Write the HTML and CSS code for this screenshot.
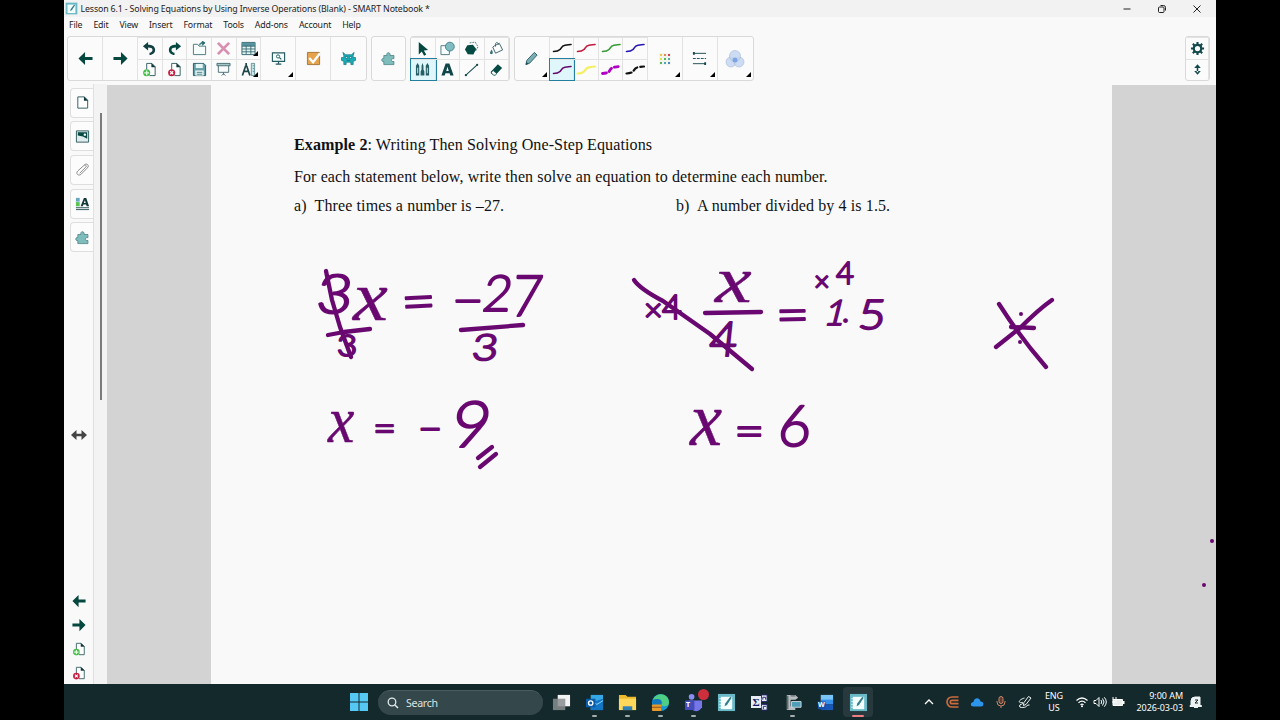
FILE: index.html
```
<!DOCTYPE html>
<html lang="en">
<head>
    <meta charset="UTF-8">
    <meta name="viewport" content="width=device-width, initial-scale=1.0">
    <title>Lesson 6.1 - SMART Notebook</title>
    <link rel="stylesheet" href="styles.css">
</head>
<body>

<!-- shared icons -->
<svg class="defs" width="0" height="0">
    <symbol id="arrow-left" viewBox="0 0 16 16"><path d="M.5 8 7.500 1V6.300H15.500v3.400H7.500V15Z" fill="#05483f"/></symbol>
    <symbol id="arrow-right" viewBox="0 0 16 16"><path d="M15.500 8 8.500 1V6.300H.5v3.400h8V15Z" fill="#05483f"/></symbol>
    <symbol id="page-add" viewBox="0 0 16 16"><path d="M5 8V1.500h5.500L14 5v9.500H8" fill="#fff" stroke="#315d60"/><path d="M10 1v4.500h4.500Z" fill="#12383b"/><circle cx="5" cy="11.500" r="3.800" fill="#47bd4b"/><path d="M5 9v5M2.500 11.500h5" stroke="#e9ffe9" stroke-width="1.300"/></symbol>
    <symbol id="page-del" viewBox="0 0 16 16"><path d="M5 8V1.500h5.500L14 5v9.500H8" fill="#fff" stroke="#315d60"/><path d="M10 1v4.500h4.500Z" fill="#12383b"/><circle cx="5" cy="11.500" r="3.800" fill="#c21d3f"/><path d="m3.400 9.900 3.200 3.200m0-3.200-3.200 3.200" stroke="#fff" stroke-width="1.300"/></symbol>
    <symbol id="puzzle" viewBox="0 0 16 16"><path d="M3 14.500V11.300C0 12 .2 7.200 3 8V4.800h3.400C5 .8 10.800.8 9.600 4.800h4.200v3.400c-3.600-.8-3.600 3.800 0 3v3.300Z" fill="#7fbdbd" stroke="#457f83" stroke-width=".8"/></symbol>
    <symbol id="curve" viewBox="0 0 20 12"><path d="M1.500 9.500C4 9.500 6.500 9 8 7.500S9.500 4 13 3.300s4-.8 6-.8" fill="none" stroke="currentColor" stroke-linecap="round"/></symbol>
    <symbol id="notebook" viewBox="0 0 20 20"><path d="M1 1h18v18H1Z" fill="#69b9c6"/><path d="M4 4h12v13H4Z" fill="#f4ffff"/><path d="M4 6H2.500M4 9H2.500M4 12H2.500M4 15H2.500" stroke="#e8ffff"/><path d="m8 14 .6-3L14 4l1.500 1-5 7.500Z" fill="#357f8d"/></symbol>
</svg>

<div class="screen">
    <div class="titlebar">
        <svg class="logo"><use href="#notebook"/></svg>
        <span class="title">Lesson 6.1 - Solving Equations by Using Inverse Operations (Blank) - SMART Notebook *</span>
        <div class="window-buttons">
            <svg viewBox="0 0 10 10"><path d="M1.500 5h7"/></svg>
            <svg viewBox="0 0 10 10"><rect x="1.500" y="3" width="5.500" height="5.500" rx="1"/><path d="M3.500 1.500h3q2 0 2 2v3"/></svg>
            <svg viewBox="0 0 10 10"><path d="m1.500 1.500 7 7m0-7-7 7"/></svg>
        </div>
    </div>

    <div class="menubar">
        <span>File</span><span>Edit</span><span>View</span><span>Insert</span><span>Format</span><span>Tools</span><span>Add-ons</span><span>Account</span><span>Help</span>
    </div>

    <div class="toolbar">
        <div class="group">
            <div class="cell big"><svg><use href="#arrow-left"/></svg></div>
            <div class="cell big"><svg><use href="#arrow-right"/></svg></div>
            <div class="pairs five">
                <div class="cell"><svg viewBox="0 0 16 16"><path d="M1 5.500 6.500 1v3C11 4 14 6 14 9.500c0 3-2.500 5-6 5.500v-2.500c2-.4 3.200-1.400 3.200-3C11.200 7.800 9.500 7 6.500 7v3Z" fill="#123f41"/></svg></div>
                <div class="cell"><svg viewBox="0 0 16 16"><path d="M15 5.500 9.500 1v3C5 4 2 6 2 9.500c0 3 2.500 5 6 5.500v-2.500c-2-.4-3.200-1.400-3.200-3C4.800 7.800 6.500 7 9.500 7v3Z" fill="#05483f"/></svg></div>
                <div class="cell"><svg viewBox="0 0 16 16"><path d="M1.500 14.500V3.500H6l1.500 2h7v9Z" fill="#f6fcfc" stroke="#4b777e"/><path d="M8 4.500C8 2 10 1.500 12 1.500M11 0l3 2-3 2.500Z" fill="#2b6b70" stroke="#2b6b70" stroke-width=".8"/></svg></div>
                <div class="cell"><svg viewBox="0 0 16 16"><path d="m2 2 12 12M14 2 2 14" stroke="#d98fb0" stroke-width="3"/></svg></div>
                <div class="cell"><svg viewBox="0 0 16 16"><path d="M1 1.500h14v13H1Z" fill="#e3f2f3" stroke="#33666b"/><path d="M1 2h14v3.500H1Z" fill="#5794a0"/><path d="M1 5.500h14M1 8.500h14M1 11.500h14M5.500 5v9M10.500 5v9" stroke="#33666b" stroke-width=".9"/></svg><i class="more"></i></div>
                <div class="cell"><svg><use href="#page-add"/></svg></div>
                <div class="cell"><svg><use href="#page-del"/></svg></div>
                <div class="cell"><svg viewBox="0 0 16 16"><path d="M1.500 1.500h11l2 2v11h-13Z" fill="#659fa7" stroke="#285b62"/><path d="M4 2h7.500v4.500H4Z" fill="#e6f6f6"/><path d="M3.500 9h9v5.500h-9Z" fill="#edf9f9"/><path d="M5 11h6M5 13h6" stroke="#477b82"/></svg></div>
                <div class="cell"><svg viewBox="0 0 16 16"><path d="M1 1.500h14v2.500H1Z" fill="#a5c7ca" stroke="#496f75"/><path d="M2.500 4v7h11V4M8 11v2.500M6 14.500l2-2 2 2" fill="none" stroke="#496f75"/></svg></div>
                <div class="cell"><svg viewBox="0 0 16 16"><path d="M5.500 1v3M5 4 1.500 14.500M6 4l3.500 10.500M3 10h5" fill="none" stroke="#1e484c" stroke-width="1.800"/><path d="M11 1.500h3.500v13H11ZM12.500 4H14M12.500 7H14M12.500 10H14" fill="#cce5e8" stroke="#477d83" stroke-width=".8"/></svg><i class="more"></i></div>
            </div>
            <div class="cell big"><svg viewBox="0 0 16 16"><path d="M1.500 2h13v9h-13Z" fill="#f5ffff" stroke="#245b60" stroke-width="1.200"/><circle cx="7.500" cy="5.800" r="1.700" fill="none" stroke="#245b60"/><path d="m9 7 2 2M8 11v2.500M5 14h6" stroke="#245b60" stroke-width="1.300"/></svg><i class="more"></i></div>
            <div class="cell big"><svg viewBox="0 0 16 16"><path d="M1.500 1.500h13v13h-13Z" fill="#e7a34c" stroke="#a47537"/><path d="m3.500 7.500 4 4.500L15 2.500" fill="none" stroke="#fff" stroke-width="2.500"/></svg></div>
            <div class="cell big"><svg viewBox="0 0 16 16"><path d="m3 5-1-3.500L5 4h6l3-2.500L13 5v2h2.500v3L13 11v3.500h-2.500V12h-5v2.500H3V11L.5 10V7H3Z" fill="#1baeb8" stroke="#126d77" stroke-width=".7"/><path d="M5 6h2v2H5Zm4 0h2v2H9ZM6 10h4" fill="#e7ffff" stroke="#075760" stroke-width=".6"/></svg></div>
        </div>

        <div class="group"><div class="cell single"><svg><use href="#puzzle"/></svg></div></div>

        <div class="group">
            <div class="pairs four">
                <div class="cell"><svg viewBox="0 0 16 16"><path d="m4 1 10 8.500-4.600.6 2.600 4.400-2.300 1.200-2.500-4.500L4 14.500Z" fill="#05483f"/></svg></div>
                <div class="cell"><svg viewBox="0 0 16 16"><path d="M1 5h9v9.500H1Z" fill="#f7ffff" stroke="#4f7881"/><circle cx="10.500" cy="6" r="4.700" fill="#80bcc2" stroke="#438089"/></svg></div>
                <div class="cell"><svg viewBox="0 0 16 16"><path d="m6 2 6-.8 3 5-3 5" fill="#fff" stroke="#58777a" stroke-dasharray="2 1"/><path d="m3.500 4.500 6-.5 3.500 4.500-3 6-6-.5-3-5Z" fill="#064b43"/></svg></div>
                <div class="cell"><svg viewBox="0 0 16 16"><path d="m6 5 5-2.500 3.500 7L7 13 4 6.500ZM7 6c-1-6 3-5 3-2" fill="#fff" stroke="#366067"/><path d="M3 9C.5 12 .5 14 2.500 14s2-2 .5-5" fill="#35727a"/></svg></div>
                <div class="cell active"><svg viewBox="0 0 16 16"><path d="m2.800 1 1.700 3v10.500H1V4ZM8 1l1 3v4l1 2v4.500H6V10l1-2V4ZM13.200 1 15 4v10.500h-3.500V4Z" fill="#265e66"/><path d="M2.800 6v6M13.200 6v6" stroke="#a4d3d8" stroke-width="1.200"/></svg></div>
                <div class="cell"><svg viewBox="0 0 16 16"><path d="M1.500 14.500 6 1.500h4l4.500 13H11l-.8-2.500H5.800L5 14.500Z" fill="#12464a"/><path d="m8 5 1.300 4.500H6.700Z" fill="#fff"/></svg></div>
                <div class="cell"><svg viewBox="0 0 16 16"><path d="m2 14 12-11" stroke="#164b4e" stroke-width="1.100"/><circle cx="2" cy="14" r="1.200" fill="#164b4e"/><circle cx="14" cy="3" r="1.200" fill="#164b4e"/></svg></div>
                <div class="cell"><svg viewBox="0 0 16 16"><path d="m2 10.500 7.500-8L14 6.500l-7.500 8H5l-3-2.500Z" fill="#064b43"/><path d="m4.300 9 4 3.500-1.800 1.500H5l-2.500-2.500Z" fill="#fff" stroke="#064b43" stroke-width=".6"/></svg></div>
            </div>
        </div>

        <div class="group">
            <div class="cell big"><svg viewBox="0 0 16 16"><path d="M2 14.500 3 10 11 1.500l3 2.800-8 8.700Z" fill="#78afb4" stroke="#315f66"/><path d="m2 14.500.7-2.700 2 2Z" fill="#164b4e"/></svg><i class="more"></i></div>
            <div class="pairs four">
                <div class="cell pen black"><svg><use href="#curve"/></svg></div>
                <div class="cell pen red"><svg><use href="#curve"/></svg></div>
                <div class="cell pen green"><svg><use href="#curve"/></svg></div>
                <div class="cell pen blue"><svg><use href="#curve"/></svg></div>
                <div class="cell pen purple active"><svg><use href="#curve"/></svg></div>
                <div class="cell pen yellow"><svg><use href="#curve"/></svg></div>
                <div class="cell pen magenta"><svg><use href="#curve"/></svg></div>
                <div class="cell pen dashed"><svg><use href="#curve"/></svg></div>
            </div>
            <div class="cell big">
                <div class="swatches"><b></b><b></b><b></b><b></b><b></b><b></b><b></b><b></b><b></b></div>
                <i class="more"></i>
            </div>
            <div class="cell big"><svg viewBox="0 0 16 16"><path d="M1 2.500h14M1 13.500h14" stroke="#164b4e"/><path d="M1 8h14" stroke="#164b4e" stroke-dasharray="3 1.200"/><path d="M1 1h2v3H1ZM13 12h2v3h-2Z" fill="#164b4e"/></svg><i class="more"></i></div>
            <div class="cell big"><svg class="wide" viewBox="0 0 20 20"><g fill="#c2d5f0" fill-opacity=".8" stroke="#a3b8da" stroke-width=".6"><circle cx="6" cy="13" r="5"/><circle cx="14" cy="13" r="5"/><circle cx="10" cy="7" r="5.500"/></g><circle cx="10" cy="11" r="2.500" fill="#7fa4e0"/></svg><i class="more"></i></div>
        </div>

        <div class="group settings">
            <div class="pairs">
                <div class="cell"><svg viewBox="0 0 16 16"><circle cx="8" cy="8" r="4" fill="none" stroke="#12494c" stroke-width="2.400"/><path d="M8 1v2.500M8 12.500V15M1 8h2.500M12.500 8H15M3 3l2 2M11 11l2 2M13 3l-2 2M5 11l-2 2" stroke="#12494c" stroke-width="2.200"/></svg></div>
                <div class="cell"><svg viewBox="0 0 16 16"><path d="m8 2.500 3.500 4h-7ZM8 13.500l3.500-4h-7ZM7.200 5h1.600v6H7.200Z" fill="#12494c"/></svg></div>
            </div>
        </div>
    </div>

    <div class="workspace">
        <div class="sidebar">
            <div class="tab"><svg viewBox="0 0 16 16"><path d="M3 2h7l3.500 3.500V14H3Z" fill="#fff" stroke="#2f5a5f"/><path d="M9.500 1.500v4.500H14Z" fill="#0c3438"/></svg></div>
            <div class="tab"><svg viewBox="0 0 16 16"><path d="M1.500 2h13v12h-13Z" fill="#e0eceb" stroke="#2f5a5f"/><path d="M3 3.500h10v7L8.500 8 3 7Z" fill="#064b43"/><circle cx="10.500" cy="6" r="1.300" fill="#fff"/></svg></div>
            <div class="tab"><svg viewBox="0 0 16 16"><path d="m5 12 6.500-6.500c1.500-1.500-.8-3-2-1.800L3 9.500c-3 3 1 6 3.500 3.500l6.500-6.500c3-3-.5-5.500-3-3.500" fill="none" stroke="#888"/></svg></div>
            <div class="tab"><svg viewBox="0 0 16 16"><path d="M1 2h4v4H1Z" fill="#65a8bf"/><path d="M1 6.500h4V11H1Z" fill="#5bc354"/><path d="m6 11 3.500-9H12l3 9h-2.500l-.7-2H9l-.7 2Z" fill="#12383b"/><path d="m10.500 4.500 1 3h-2Z" fill="#fff"/><path d="M1 12.500h14M1 14.500h14" stroke="#274f55"/></svg></div>
            <div class="tab"><svg><use href="#puzzle"/></svg></div>
            <svg class="resize" viewBox="0 0 18 12"><path d="M1 6 6.500 1v3.700h5V1L17 6l-5.500 5V7.300h-5V11Z" fill="#444"/></svg>
            <div class="page-nav">
                <svg><use href="#arrow-left"/></svg>
                <svg><use href="#arrow-right"/></svg>
                <svg><use href="#page-add"/></svg>
                <svg><use href="#page-del"/></svg>
            </div>
        </div>
        <div class="scroll-strip"><div class="thumb"></div></div>
        <div class="canvas">
            <div class="page">
                <p class="heading"><b>Example 2</b>: Writing Then Solving One-Step Equations</p>
                <p class="intro">For each statement below, write then solve an equation to determine each number.</p>
                <div class="questions">
                    <p class="qa">a)&nbsp; Three times a number is –27.</p>
                    <p class="qb">b)&nbsp; A number divided by 4 is 1.5.</p>
                </div>
            </div>
        </div>

        <!-- pen layer, uses screen coordinates -->
        <svg class="ink" viewBox="64 84 1152 600">
            <g class="hand">
                <text transform="translate(315 313) skewX(-6) scale(1.15 1)" font-size="54">3</text>
                <text class="var" transform="translate(353 320) scale(1.12 1)" font-size="70">x</text>
                <text transform="translate(402 321) rotate(-3) scale(1.12 1)" font-size="54">=</text>
                <text transform="translate(452 318) scale(1.1 1)" font-size="50">−</text>
                <text transform="translate(481 311) skewX(-8)" font-size="50">2</text>
                <text transform="translate(510 316) skewX(-6) scale(.92 1)" font-size="57">7</text>
                <text transform="translate(337 356) scale(1.2 1)" font-size="29">3</text>
                <text transform="translate(471 360) skewX(-6) scale(1.25 1)" font-size="36">3</text>
                <text class="var" transform="translate(328 442) scale(.9 1)" font-size="66">x</text>
                <text transform="translate(373 442)" font-size="40">=</text>
                <text transform="translate(418 443)" font-size="42">−</text>
                <text transform="translate(449 447) skewX(-8) scale(1.05 1)" font-size="64">9</text>
                <text transform="translate(644 321)" font-size="32">×</text>
                <text transform="translate(662 319)" font-size="34">4</text>
                <text class="var" transform="translate(715 302) scale(1.25 1)" font-size="66">x</text>
                <text transform="translate(708 356) skewX(-6)" font-size="48">4</text>
                <text transform="translate(776 333) rotate(-1) scale(1.12 1)" font-size="52">=</text>
                <text transform="translate(814 291)" font-size="27">×</text>
                <text transform="translate(836 284)" font-size="31">4</text>
                <text transform="translate(823 325) skewX(-14)" font-size="35">1</text>
                <text transform="translate(842 322)" font-size="30">.</text>
                <text transform="translate(857 329) skewX(-6) scale(1.15 1)" font-size="41">5</text>
                <text class="var" transform="translate(690 445) scale(.95 1)" font-size="76">x</text>
                <text transform="translate(734 447) scale(1.1 1)" font-size="48">=</text>
                <text transform="translate(777 446) skewX(-4)" font-size="57">6</text>
            </g>
            <g class="stroke">
                <path d="M326 271 332 300 340 327 351 357"/>
                <path d="M328 335 344 332 370 329"/>
                <path d="M461 330 523 325"/>
                <path d="M478 458 492 447M480 467 496 454"/>
                <path d="M634 280Q640 289 663 301L710 334 752 369"/>
                <path d="M705 313 761 312"/>
                <path d="M999 304Q1020 337 1046 367"/>
                <path d="M996 347 1020 328Q1039 309 1052 300"/>
                <path d="M1011 327 1034 328"/>
            </g>
            <circle cx="1021" cy="314" r="2"/>
            <circle cx="1020" cy="342" r="2"/>
            <circle cx="1212" cy="541" r="2"/>
            <circle cx="1204" cy="585" r="2"/>
        </svg>
    </div>

    <div class="taskbar">
        <svg class="start" viewBox="0 0 18 18"><path d="M0 0h8.500v8.500H0ZM9.500 0H18v8.500H9.500ZM0 9.500h8.500V18H0ZM9.500 9.500H18V18H9.500Z" fill="#55c8f4"/></svg>
        <div class="search">
            <svg viewBox="0 0 12 12"><circle cx="5" cy="5" r="3.800" fill="none" stroke="#e2eaea" stroke-width="1.300"/><path d="m8 8 3 3" stroke="#e2eaea" stroke-width="1.500"/></svg>
            <span>Search</span>
        </div>
        <div class="apps">
            <div class="app"><svg viewBox="0 0 20 20"><path d="M6 2h13v12H6Z" fill="#f3f3f3"/><path d="M1 6h13v12H1Z" fill="#888d8f" fill-opacity=".85"/></svg></div>
            <div class="app open"><svg viewBox="0 0 20 20"><path d="M6 2h13v16H6Z" fill="#35a6e6"/><path d="M6 10 19 6v12H6Z" fill="#1475c4"/><path d="m6 8 6.500 4L19 8" fill="none" stroke="#8edcff"/><rect x="1" y="6" width="10" height="9" fill="#0a5ba8"/><circle cx="6" cy="10.500" r="2.300" fill="none" stroke="#fff" stroke-width="1.400"/></svg></div>
            <div class="app open"><svg viewBox="0 0 20 20"><path d="M1 2h7l2 2h9v14H1Z" fill="#efb92d"/><path d="M1 6h18v12H1Z" fill="#ffd75a"/><path d="M5 18v-4h10v4Z" fill="#2d80b8"/></svg></div>
            <div class="app open"><svg viewBox="0 0 20 20"><circle cx="10" cy="10" r="9" fill="#1598d5"/><path d="M2 7C6-2 19 0 19 10c0 4-5 5-8 3 3-5-2-8-9-6Z" fill="#4fcf83"/><path d="M2 8c6-4 11 0 8 5l2 5c-6 2-12-4-10-10Z" fill="#1477bd"/><rect x="1" y="12" width="10" height="7" rx="1" fill="#e89a2d"/><path d="M1 15h10" stroke="#87521d"/></svg></div>
            <div class="app open"><svg viewBox="0 0 20 20"><circle cx="8" cy="4" r="3" fill="#8b8df1"/><path d="M5 8h14v7q-5 7-11 2Z" fill="#7676e9"/><rect x="1" y="8" width="10" height="10" rx="1" fill="#444cba"/></svg><span class="tm">T</span><span class="badge"></span></div>
            <div class="app"><svg><use href="#notebook"/></svg></div>
            <div class="app"><div class="sigma"><span>Σ</span></div><svg viewBox="0 0 20 20"><path d="M12 2h6v7h-6ZM12 12h6v6h-6Z" fill="#e8edf5" stroke="#23256b"/><path d="M13.500 7V4.500h3V7M14 17v-3h3" fill="none" stroke="#23256b"/><path d="m10 9 2-3M10 12l2 3" stroke="#e8edf5"/></svg></div>
            <div class="app open"><svg viewBox="0 0 20 20"><path d="M4 2h9l3 3-3 2H8v7l5 2v2H4Z" fill="#b7bec1"/><path d="M5 3v14M8 3h5" stroke="#60696c" stroke-width="1.500"/><path d="M9 9h10v6H9Z" fill="#4d9db8" stroke="#cddadd"/></svg></div>
            <div class="app"><svg viewBox="0 0 20 20"><path d="M5 2h13v6H5Z" fill="#79c5f7"/><path d="M5 7h13v5H5Z" fill="#3690e9"/><path d="M5 12h13v6H5Z" fill="#1757b7"/><rect x="2" y="9" width="8" height="8" fill="#1550a6"/></svg><span class="wd">W</span></div>
            <div class="app current"><svg><use href="#notebook"/></svg></div>
        </div>
        <div class="tray">
            <svg viewBox="0 0 14 14"><path d="m3 9 4-4 4 4" fill="none" stroke="#fff" stroke-width="1.300"/></svg>
            <svg viewBox="0 0 14 14"><path d="M12.500 2H6a4.800 4.800 0 0 0 0 10h6.500M12.500 5.300H6a1.700 1.700 0 0 0 0 3.400h6.500" fill="none" stroke="#cc6b3e" stroke-width="1.700"/></svg>
            <svg viewBox="0 0 14 14"><path d="M3.500 11.500C-.5 11.500.5 7 3.500 7 4 2.500 9.500 2 10.500 6.500c4 0 3.500 5 .5 5Z" fill="#2c95ee"/></svg>
            <svg viewBox="0 0 14 14"><rect x="5" y="1.500" width="4" height="7" rx="2" fill="#5a3d32" stroke="#cc8565"/><path d="M3 6v1a4 4 0 0 0 8 0V6M7 11v2" fill="none" stroke="#cc8565"/></svg>
            <svg viewBox="0 0 14 14"><path d="M10.500 1.500 13 3 8 9.500l-2.500 1 .3-2.700ZM6.500 3C3 4 .5 6 1.500 7.200S5 6.500 5 8s-3.500.8-3.500 3 3 1.300 5 1.300 2.500-3 5-2.300" fill="none" stroke="#f1f4f4"/></svg>
            <div class="lang">ENG<br>US</div>
            <div class="status">
                <svg viewBox="0 0 14 14"><path d="M1.500 5.500q5.500-5 11 0M3.500 7.700q3.500-3 7 0M5.500 9.700q1.500-1.300 3 0" fill="none" stroke="#fff" stroke-width="1.200"/><circle cx="7" cy="11.300" r="1" fill="#fff"/></svg>
                <svg viewBox="0 0 14 14"><path d="M1 5.500h2l3-3v9l-3-3H1ZM8 5q1.500 2 0 4M9.500 3.500q3 3.500 0 7M11.300 2.300q4 4.700 0 9.400" fill="none" stroke="#fff"/></svg>
                <svg viewBox="0 0 14 14"><path d="M2 4.500h9.500v6H2Z" fill="#e8eded" stroke="#fff"/><path d="M12 6h1.500v3H12Z" fill="#fff"/><path d="M1 7h5M2 2v3M5 2v3" stroke="#fff"/></svg>
            </div>
            <div class="clock">9:00 AM<br>2026-03-03</div>
            <svg class="bell" viewBox="0 0 14 14"><path d="M2 10.500V6q0-4 4-4h5v8.500h1.500v1H1v-1ZM5 12.500h4" fill="#edf3f3" stroke="#edf3f3"/><path d="M6 5h3L6 8h3" fill="none" stroke="#14292c"/></svg>
        </div>
    </div>
</div>

</body>
</html>
```

FILE: styles.css
```
* {
    box-sizing: border-box;
}
body {
    margin: 0;
    background: #000;
    font-family: "Noto Sans", "Open Sans", sans-serif;
    overflow: hidden;
}
svg {
    display: block;
    flex: none;
}
.defs {
    position: absolute;
}
.screen {
    width: 1152px;
    height: 720px;
    margin: 0 auto;
    background: #f9f9f9;
    display: flex;
    flex-direction: column;
}

/* title and menu */
.titlebar {
    height: 17px;
    background: #f2f2f2;
    display: flex;
    align-items: center;
    padding-left: 1px;
    font-size: 8.800px;
    color: #222;
}
.logo {
    width: 13px;
    height: 13px;
    margin-right: 2.500px;
}
.title {
    white-space: nowrap;
    letter-spacing: -.135px;
}
.window-buttons {
    margin-left: auto;
    display: flex;
    gap: 25px;
    padding-right: 14px;
}
.window-buttons svg {
    width: 10px;
    height: 10px;
    fill: none;
    stroke: #222;
}
.menubar {
    height: 16px;
    display: flex;
    align-items: center;
    gap: 11px;
    padding-left: 5px;
    font-size: 8.800px;
    letter-spacing: -.17px;
    color: #222;
}

/* toolbar */
.toolbar {
    height: 51px;
    display: flex;
    align-items: flex-start;
    gap: 3.800px;
    padding: 3px 6px 0 3px;
}
.group {
    height: 45px;
    display: flex;
    border: 1px solid #d9d9d9;
    border-radius: 3px;
    background: #fbfbfb;
}
.settings {
    margin-left: auto;
}
.cell {
    position: relative;
    display: flex;
    align-items: center;
    justify-content: center;
    border-right: 1px solid #e2e2e2;
}
.cell svg {
    width: 15px;
    height: 15px;
}
.cell svg.wide {
    width: 20px;
    height: 20px;
}
.big {
    width: 35px;
}
.single {
    width: 33px;
}
.group > .cell:last-child {
    border-right: none;
}
.pairs {
    display: grid;
    grid-template-rows: 21.500px 21.500px;
    grid-template-columns: 23px;
}
.pairs .cell {
    border-top: 1px solid #e2e2e2;
}
.five {
    grid-template-columns: repeat(5, 24.700px);
}
.four {
    grid-template-columns: repeat(4, 24.500px);
}
.cell.active {
    background: #dff6fb;
    outline: 1.500px solid #247e9e;
}
.more {
    position: absolute;
    right: 2px;
    bottom: 3px;
    border-left: 5px solid transparent;
    border-bottom: 5px solid #000;
}
.pen svg {
    width: 20px;
    height: 12px;
    stroke-width: 1.600;
}
.black { color: #111; }
.red { color: #c4193c; }
.green { color: #369b37; }
.blue { color: #2316b4; }
.purple { color: #650870; }
.yellow { color: #f4f061; }
.magenta { color: #b100c4; }
.dashed { color: #111; }
.yellow svg {
    stroke-width: 2.200;
}
.magenta svg {
    stroke-width: 2.800;
    stroke-dasharray: 4 3;
}
.dashed svg {
    stroke-width: 2.200;
    stroke-dasharray: 5 3;
}
.swatches {
    display: grid;
    grid-template-columns: repeat(3, 4px);
    grid-auto-rows: 4px;
    background: #e4ebe0;
}
.swatches b {
    border: .5px solid #f4f4ee;
    background: #55b955;
}
.swatches b:nth-child(1) { background: #f0c850; }
.swatches b:nth-child(2) { background: #e58a4e; }
.swatches b:nth-child(3) { background: #d7405e; }
.swatches b:nth-child(4) { background: #e4df4c; }
.swatches b:nth-child(6) { background: #4fb6a5; }
.swatches b:nth-child(8) { background: #4aa9bb; }
.swatches b:nth-child(9) { background: #478cc4; }

/* workspace */
.workspace {
    position: relative;
    height: 600px;
    display: flex;
}
.sidebar {
    width: 30px;
    border-right: 1px solid #e0e0e0;
    padding-top: 3.500px;
    display: flex;
    flex-direction: column;
    align-items: flex-end;
    gap: 3.500px;
}
.tab {
    width: 23px;
    height: 30.200px;
    display: flex;
    align-items: center;
    justify-content: center;
    border: 1px solid #dedede;
    border-right: none;
    border-radius: 4px 0 0 4px;
    background: #fcfcfc;
}
.tab svg {
    width: 15px;
    height: 15px;
}
.resize {
    width: 18px;
    height: 12px;
    margin: 173px 5px 0 0;
}
.page-nav {
    margin-top: auto;
    margin-right: 7px;
    padding-bottom: 4px;
    display: flex;
    flex-direction: column;
    gap: 10px;
}
.page-nav svg {
    width: 14px;
    height: 14px;
}
.scroll-strip {
    width: 13px;
    background: #f3f3f3;
    padding: 29px 0 0 6px;
}
.thumb {
    width: 2px;
    height: 287px;
    background: #7b7b7b;
}
.canvas {
    flex: 1;
    margin-top: 1px;
    background: #d3d3d3;
    padding: 0 104px 0 103.500px;
}
.page {
    height: 100%;
    background: #f9f9f9;
    padding: 50px 0 0 83.500px;
    font-family: "Liberation Serif", serif;
    font-size: 16px;
    letter-spacing: .108px;
    line-height: 20px;
    color: #111;
    white-space: nowrap;
}
.page p {
    margin: 0;
}
.heading {
    font-size: 16.100px;
    letter-spacing: .07px;
}
.page .intro {
    margin-top: 12px;
}
.questions {
    display: flex;
    margin-top: 9px;
}
.qa {
    width: 382px;
}

/* handwriting */
.ink {
    position: absolute;
    left: 0;
    top: 0;
    width: 1152px;
    height: 600px;
    fill: #690870;
}
.hand {
    font-family: Lato, sans-serif;
    font-weight: 300;
    stroke: #690870;
    stroke-width: 2;
    stroke-linejoin: round;
}
.var {
    font-family: "Liberation Serif", serif;
    font-style: italic;
    font-weight: 400;
    stroke-width: .5;
}
.stroke {
    fill: none;
    stroke: #690870;
    stroke-width: 4.300;
    stroke-linecap: round;
    stroke-linejoin: round;
}

/* taskbar */
.taskbar {
    height: 36px;
    background: #14292c;
    display: flex;
    align-items: center;
    padding-left: 286px;
    color: #fff;
}
.start {
    width: 18px;
    height: 18px;
}
.search {
    width: 165px;
    height: 25px;
    margin-left: 10px;
    border-radius: 13px;
    border-top: 1px solid #4a5c5f;
    background: #34484b;
    display: flex;
    align-items: center;
    gap: 7px;
    padding-left: 9px;
    font-size: 10.600px;
    letter-spacing: -.3px;
    color: #dbe3e3;
}
.search svg {
    width: 12px;
    height: 12px;
}
.apps {
    display: flex;
    gap: 3px;
    margin-left: 3px;
}
.app {
    position: relative;
    width: 30px;
    height: 30px;
    display: flex;
    align-items: center;
    justify-content: center;
    border-radius: 4px;
}
.app svg {
    width: 19px;
    height: 19px;
}
.open::after, .current::after {
    content: "";
    position: absolute;
    bottom: 0;
    left: 13px;
    width: 5px;
    height: 2px;
    border-radius: 1px;
    background: #a5adae;
}
.current {
    background: #27393c;
}
.current::after {
    left: 9px;
    width: 12px;
    background: #ee7e82;
}
.badge {
    position: absolute;
    right: -1px;
    top: 2px;
    width: 11px;
    height: 11px;
    border-radius: 50%;
    background: #cd2f3d;
}
.tm, .wd {
    position: absolute;
    left: 8px;
    top: 14px;
    font-size: 7px;
    line-height: 8px;
    font-weight: bold;
}
.sigma {
    position: absolute;
    left: 7px;
    top: 9px;
    width: 10px;
    height: 12px;
    background: #e8edf5;
    color: #141b65;
    font: bold 11px/12px "Liberation Serif", serif;
    text-align: center;
}
.tray {
    margin-left: auto;
    display: flex;
    align-items: center;
    padding-right: 13px;
    font-size: 9px;
    line-height: 12px;
    letter-spacing: -.05px;
}
.tray > svg {
    width: 14px;
    height: 14px;
    margin-right: 10px;
}
.lang {
    width: 20px;
    margin-left: 2px;
    text-align: center;
}
.status {
    display: flex;
    gap: 4px;
    margin-left: 11px;
}
.status svg {
    width: 14px;
    height: 14px;
}
.clock {
    width: 58px;
    text-align: right;
}
.tray .bell {
    margin: 0 0 0 6px;
}
```
